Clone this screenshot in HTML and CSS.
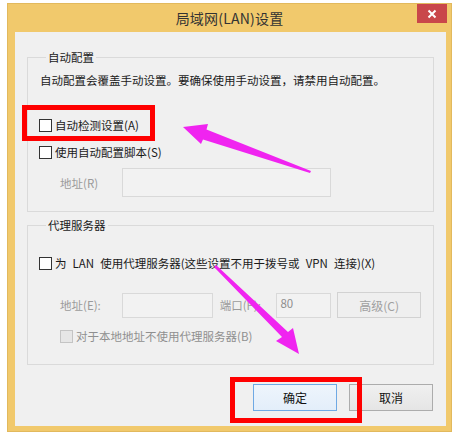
FILE: index.html
```html
<!DOCTYPE html>
<html lang="zh-CN">
<head>
<meta charset="utf-8">
<title>局域网(LAN)设置</title>
<link rel="stylesheet" href="styles.css">
</head>
<body>
  <div class="window">
    <div class="titlebar">
      <span></span>
      <span class="title">局域网(LAN)设置</span>
      <button class="close" aria-label="关闭">
        <svg width="10" height="10" viewBox="0 0 10 10"><path d="M1.5 1.5 L8.5 8.5 M8.5 1.5 L1.5 8.5" stroke="#fff" stroke-width="2" fill="none"/></svg>
      </button>
    </div>

    <div class="client">
      <fieldset class="group group-auto">
        <legend>自动配置</legend>
        <p class="desc">自动配置会覆盖手动设置。要确保使用手动设置，请禁用自动配置。</p>
        <label class="check check-detect"><input type="checkbox">自动检测设置(A)</label>
        <label class="check check-script"><input type="checkbox">使用自动配置脚本(S)</label>
        <div class="field-row row-script">
          <span class="field-label">地址(R)</span>
          <input type="text" class="text-box box-script" disabled>
        </div>
      </fieldset>

      <fieldset class="group group-proxy">
        <legend>代理服务器</legend>
        <label class="check check-proxy"><input type="checkbox">为 LAN 使用代理服务器(这些设置不用于拨号或 VPN 连接)(X)</label>
        <div class="field-row row-proxy">
          <span class="field-label">地址(E):</span>
          <input type="text" class="text-box box-addr" disabled>
          <span class="field-label port-label">端口(P):</span>
          <input type="text" class="text-box box-port" value="80" disabled>
          <button class="btn btn-advanced" disabled>高级(C)</button>
        </div>
        <label class="check check-local disabled"><input type="checkbox" disabled>对于本地地址不使用代理服务器(B)</label>
      </fieldset>

      <div class="actions">
        <button class="btn btn-ok">确定</button>
        <button class="btn btn-cancel">取消</button>
      </div>
    </div>
  </div>

  <!-- marks drawn on top of the screenshot -->
  <svg class="marks" width="455" height="436" viewBox="0 0 455 436">
    <rect x="24.5" y="107.5" width="128" height="31" fill="none" stroke="#ff0000" stroke-width="5"/>
    <rect x="232.5" y="379.5" width="127" height="41" fill="none" stroke="#ff0000" stroke-width="5"/>
    <polygon points="183,127 208,124 206.5,129.5 311,171 310,173 203,139.5 201,144" fill="#f024f0"/>
    <polygon points="216,265 288,332 293,328 299,354 276,341 282,337 214,267" fill="#f024f0"/>
  </svg>
</body>
</html>
```

FILE: styles.css
```css
body {
    margin: 0;
    background-color: #fff;
    font-family: "Noto Sans CJK SC", "Noto Sans", sans-serif;
    font-size: 11.5px;
    color: #1a1a1a;
}

.window {
    margin: 3px 0 0 7px;
    width: 445px;
    height: 429px;
    box-sizing: border-box;
    background-color: #f1c96c;
    border: 1px solid #e2b95d;
    display: flex;
    flex-direction: column;
}

.titlebar {
    height: 28px;
    display: grid;
    grid-template-columns: 1fr auto 1fr;
    align-items: center;
}

.title {
    font-size: 14px;
    color: #333;
    line-height: 20px;
    letter-spacing: 0.2px;
}

.close {
    justify-self: end;
    align-self: start;
    width: 30px;
    height: 19px;
    margin-right: 4px;
    padding: 0;
    border: none;
    background-color: #c9474a;
    display: flex;
    justify-content: center;
    align-items: center;
}

.client {
    flex: 1;
    margin: 0 5px 5px 7px;
    padding: 17px 12px 0 12px;
    background-color: #f0f0f0;
}

.group {
    margin: 0;
    padding: 0 12px 14px 12px;
    border: 1px solid #dadada;
    min-width: 0;
}

.group legend {
    margin-left: 6px;
    padding: 0 2px;
    line-height: 16px;
}

.group-proxy {
    margin-top: 5px;
    padding-bottom: 20px;
}

.desc {
    margin: 7px 0 0 0;
    line-height: 16px;
}

.check {
    display: flex;
    align-items: center;
    gap: 3px;
    height: 16px;
    line-height: 16px;
    margin-left: -1px;
}

.check input {
    appearance: none;
    width: 13px;
    height: 13px;
    margin: 0;
    border: 1px solid #333;
    background-color: #fff;
}

.check.disabled {
    color: #8f8f8f;
    margin-left: 20px;
}

.check.disabled input {
    border-color: #c4c4c4;
    background-color: #e6e6e6;
}

.check-detect { margin-top: 29px; }
.check-script { margin-top: 11px; }
.check-proxy { margin-top: 22px; word-spacing: 3.5px; }
.check-local { margin-top: 10px; }

.field-row {
    display: flex;
    align-items: center;
}

.row-script {
    margin-top: 8px;
    height: 29px;
}

.row-proxy {
    margin-top: 21px;
    height: 26px;
}

.field-label {
    width: 62px;
    margin-left: 20px;
    color: #9b9b9b;
}

.port-label {
    width: 57px;
    margin-left: 7px;
}

.text-box {
    box-sizing: border-box;
    margin: 0;
    padding: 0 3px 4px 3px;
    border: 1px solid #d9d9d9;
    background-color: #f2f2f2;
    font: inherit;
    color: #8e8e8e;
    -webkit-text-fill-color: #8e8e8e;
}

.box-script {
    width: 209px;
    height: 29px;
}

.box-addr {
    width: 91px;
    height: 25px;
}

.box-port {
    width: 55px;
    height: 25px;
}

.btn {
    box-sizing: border-box;
    width: 84px;
    margin: 0;
    padding: 0;
    font: inherit;
    font-size: 12px;
    color: #111;
    border: 1px solid #acacac;
    background: linear-gradient(#f0f0f0, #e5e5e5);
    border-radius: 0;
}

.btn-advanced {
    height: 26px;
    margin-left: 6px;
    color: #a0a0a0;
    border-color: #d2d2d2;
    background: #efefef;
}

.actions {
    display: flex;
    justify-content: flex-end;
    gap: 12px;
    margin-top: 19px;
    margin-right: 1px;
}

.actions .btn {
    height: 27px;
}

.btn-ok {
    border-color: #6fa9e4;
    background: linear-gradient(#eef5fc, #e3eefa);
}

.marks {
    position: absolute;
    top: 0;
    left: 0;
    pointer-events: none;
}
```
